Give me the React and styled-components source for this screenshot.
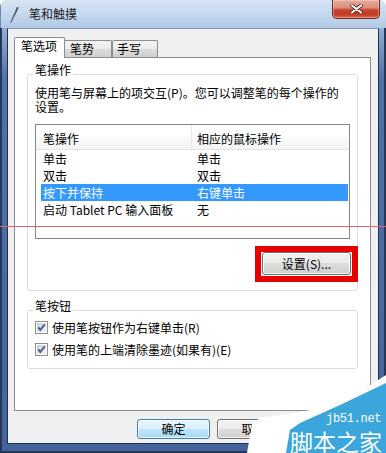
import React from "react";
import styled, { createGlobalStyle } from "styled-components";

const FONT = `"Noto Sans CJK SC", "Noto Sans", sans-serif`;

const GlobalStyle = createGlobalStyle`
  html, body { margin: 0; padding: 0; background: #ffffff; }
  body { width: 386px; height: 453px; overflow: hidden; font-family: ${FONT}; }
  *, *::before, *::after { box-sizing: border-box; }
`;

const Window = styled.div`
  position: relative;
  width: 386px;
  height: 453px;
  display: flex;
  flex-direction: column;
  overflow: hidden;
  border-radius: 7px 7px 0 0;
  background: #c9daee;
  font-family: ${FONT};
  font-size: 12px;
  color: #000;
`;

const TitleBar = styled.div`
  height: 28px;
  flex: none;
  display: flex;
  align-items: center;
  padding: 0 6px 0 7px;
  border-left: 1px solid #7088ab;
  background: linear-gradient(180deg, #d7e5f5 0%, #c5d8ee 50%, #b1c8e4 100%);
`;

const TitleIcon = styled.svg`
  width: 14px;
  height: 18px;
  flex: none;
`;

const TitleText = styled.span`
  margin-left: 7px;
  font-size: 12px;
  line-height: 14px;
  color: #1b1b1b;
`;

const CloseButton = styled.div`
  margin-left: auto;
  align-self: flex-start;
  width: 48px;
  height: 19px;
  display: flex;
  align-items: center;
  justify-content: center;
  border: 1px solid #6e2a22;
  border-top: none;
  border-radius: 0 0 5px 5px;
  background: linear-gradient(180deg, #e6ab9e 0%, #d98e7e 42%, #c8462f 55%, #c03a25 78%, #d8633f 100%);
  box-shadow: inset 0 0 0 1px rgba(255, 215, 205, 0.45);
`;

const FrameBody = styled.div`
  flex: 1;
  display: flex;
  background: linear-gradient(180deg, #94aed3 0%, #4f72a8 50px, #42649a 100%);
  border-left: 2px solid #26375a;
  border-right: 2px solid #26375a;
  border-bottom: 2px solid #26375a;
  padding: 0 5px 7px 5px;
`;

const Client = styled.div`
  flex: 1;
  display: flex;
  flex-direction: column;
  background: #f0f0f0;
  border: 1px solid #1f3054;
  border-top-color: #8196b7;
  padding: 8px 7px 4px 6px;
`;

const TabStrip = styled.div`
  position: relative;
  z-index: 1;
  height: 20px;
  flex: none;
  display: flex;
  align-items: flex-end;
`;

const Tab = styled.div`
  width: ${(p) => p.$w}px;
  height: ${(p) => (p.$active ? 21 : 17)}px;
  margin-left: ${(p) => p.$ml || 0}px;
  margin-bottom: ${(p) => (p.$active ? -1 : 0)}px;
  padding: 1px 0 0 ${(p) => p.$pl}px;
  border: 1px solid #898c95;
  border-bottom: none;
  border-radius: 2px 2px 0 0;
  background: ${(p) =>
    p.$active
      ? "#ffffff"
      : "linear-gradient(180deg, #f3f3f3 0%, #ebebeb 50%, #dddddd 50%, #cfcfcf 100%)"};
  font-size: 12px;
  line-height: 14px;
  white-space: nowrap;
`;

const Panel = styled.div`
  height: 354px;
  flex: none;
  display: flex;
  flex-direction: column;
  border: 1px solid #898c95;
  background: #ffffff;
  padding: 16px 12px 0 12px;
`;

const Group = styled.div`
  position: relative;
  display: flex;
  flex-direction: column;
  margin-top: ${(p) => p.$mt || 0}px;
  padding: ${(p) => p.$pad};
  border: 1px solid #d5dfe5;
  border-radius: 3px;
`;

const Legend = styled.span`
  position: absolute;
  top: -12px;
  left: 5px;
  padding: 0 2px;
  background: #ffffff;
  font-size: 12px;
  line-height: 14px;
`;

const Desc = styled.div`
  font-size: 12px;
  line-height: 14px;
  white-space: nowrap;
`;

const ListBox = styled.div`
  margin-top: 10px;
  height: 115px;
  display: flex;
  flex-direction: column;
  border: 1px solid #828790;
  background: #ffffff;
`;

const HeaderRow = styled.div`
  height: 25px;
  flex: none;
  display: flex;
  border-bottom: 1px solid #e3e3e3;
  background: linear-gradient(180deg, #ffffff 0%, #ffffff 50%, #f9fafb 50%, #f3f4f6 100%);
`;

const HeaderCell = styled.div`
  display: flex;
  align-items: center;
  padding: 2px 0 0 ${(p) => p.$pl}px;
  width: ${(p) => (p.$w ? `${p.$w}px` : "auto")};
  flex: ${(p) => (p.$w ? "none" : "1")};
  border-right: ${(p) => (p.$divider ? "1px solid #e3e8ee" : "none")};
  white-space: nowrap;
`;

const Row = styled.div`
  height: 17px;
  flex: none;
  display: flex;
  margin: 0 1px 0 5px;
  background: ${(p) => (p.$selected ? "#3399ff" : "transparent")};
  color: ${(p) => (p.$selected ? "#ffffff" : "#000000")};
  line-height: 17px;
`;

const Cell = styled.div`
  width: ${(p) => (p.$w ? `${p.$w}px` : "auto")};
  flex: ${(p) => (p.$w ? "none" : "1")};
  padding-left: ${(p) => p.$pl}px;
  white-space: nowrap;
`;

const RedMark = styled.div`
  align-self: flex-end;
  display: flex;
  margin: 7px -8px 0 0;
  padding: 0 1px 1px 1px;
  border: 6px solid #e60000;
`;

const Button = styled.button`
  width: ${(p) => p.$w}px;
  height: ${(p) => p.$h}px;
  flex: none;
  padding: 0;
  border: 1px solid ${(p) => (p.$primary ? "#3c7fb1" : "#707070")};
  border-radius: 3px;
  background: ${(p) =>
    p.$primary
      ? "linear-gradient(180deg, #eaf6fd 0%, #d9f0fc 50%, #bee6fd 50%, #a7d9f5 100%)"
      : "linear-gradient(180deg, #f2f2f2 0%, #ebebeb 50%, #dddddd 50%, #cfcfcf 100%)"};
  box-shadow: inset 0 0 0 1px rgba(255, 255, 255, 0.75);
  font-family: ${FONT};
  font-size: 12px;
  line-height: 14px;
  color: #000;
  white-space: nowrap;
`;

const CheckRow = styled.div`
  height: 22px;
  display: flex;
  align-items: center;
  gap: 4px;
  white-space: nowrap;
`;

const CheckBoxIcon = styled.svg`
  width: 13px;
  height: 13px;
  flex: none;
`;

const ButtonRow = styled.div`
  margin-top: 8px;
  margin-right: 1px;
  height: 20px;
  flex: none;
  display: flex;
  justify-content: flex-end;
  gap: 7px;
`;

const RedLine = styled.div`
  position: absolute;
  left: 0;
  right: 0;
  top: 226px;
  height: 1px;
  background: #e36565;
  z-index: 5;
`;

const WatermarkShape = styled.svg`
  position: absolute;
  right: 0;
  bottom: 0;
  width: 140px;
  height: 85px;
  z-index: 6;
`;

const WatermarkSite = styled.div`
  position: absolute;
  left: 326px;
  top: 413px;
  z-index: 7;
  font-family: "Liberation Mono", "DejaVu Sans Mono", monospace;
  font-size: 12px;
  line-height: 13px;
  letter-spacing: -0.3px;
  color: #ffffff;
`;

const WatermarkName = styled.div`
  position: absolute;
  left: 290px;
  top: 429px;
  z-index: 7;
  font-size: 23px;
  line-height: 24px;
  color: #ffffff;
  white-space: nowrap;
`;

function CheckBox() {
  return (
    <CheckBoxIcon viewBox="0 0 13 13">
      <defs>
        <linearGradient id="cbg" x1="0" y1="0" x2="1" y2="1">
          <stop offset="0" stopColor="#c9ced6" />
          <stop offset="1" stopColor="#f4f5f6" />
        </linearGradient>
      </defs>
      <rect x="0.5" y="0.5" width="12" height="12" fill="#ffffff" stroke="#8e8f8f" />
      <rect x="2" y="2" width="9" height="9" fill="url(#cbg)" />
      <path d="M3.2 6.4 L5.3 8.9 L9.8 3.4" fill="none" stroke="#4a5f8e" strokeWidth="1.9" />
    </CheckBoxIcon>
  );
}

const rows = [
  ["单击", "单击"],
  ["双击", "双击"],
  ["按下并保持", "右键单击", true],
  ["启动 Tablet PC 输入面板", "无"],
];

export default function App() {
  return (
    <>
      <GlobalStyle />
      <Window>
        <TitleBar>
          <TitleIcon viewBox="0 0 14 18">
            <defs>
              <linearGradient id="pen" x1="0" y1="1" x2="1" y2="0">
                <stop offset="0" stopColor="#6b7480" />
                <stop offset="1" stopColor="#1e232b" />
              </linearGradient>
            </defs>
            <path d="M2 17.5 L9 2 L10.6 2.7 L3.2 18 Z" fill="url(#pen)" />
            <path d="M2.6 17 L9.4 2.6" stroke="#9aa6b4" strokeWidth="0.5" />
          </TitleIcon>
          <TitleText>笔和触摸</TitleText>
          <CloseButton>
            <svg width="13" height="10" viewBox="0 0 13 10">
              <path d="M2 1.5 L11 8.5 M11 1.5 L2 8.5" stroke="#5a1e16" strokeWidth="3.6" strokeLinecap="round" />
              <path d="M2 1.5 L11 8.5 M11 1.5 L2 8.5" stroke="#ffffff" strokeWidth="2.2" strokeLinecap="round" />
            </svg>
          </CloseButton>
        </TitleBar>
        <FrameBody>
          <Client>
            <TabStrip>
              <Tab $active $w={51} $pl={6}>笔选项</Tab>
              <Tab $w={48} $ml={-1} $pl={5}>笔势</Tab>
              <Tab $w={46} $pl={4}>手写</Tab>
            </TabStrip>
            <Panel>
              <Group $pad="11px 7px 8px 7px">
                <Legend>笔操作</Legend>
                <Desc>
                  使用笔与屏幕上的项交互(P)。您可以调整笔的每个操作的
                  <br />
                  设置。
                </Desc>
                <ListBox>
                  <HeaderRow>
                    <HeaderCell $w={156} $pl={7} $divider>笔操作</HeaderCell>
                    <HeaderCell $pl={5}>相应的鼠标操作</HeaderCell>
                  </HeaderRow>
                  {rows.map(([a, b, sel]) => (
                    <Row key={a} $selected={sel}>
                      <Cell $w={150} $pl={2}>{a}</Cell>
                      <Cell $pl={6}>{b}</Cell>
                    </Row>
                  ))}
                </ListBox>
                <RedMark>
                  <Button $w={89} $h={23}>设置(S)...</Button>
                </RedMark>
              </Group>
              <Group $mt={19} $pad="5px 7px 8px 7px">
                <Legend>笔按钮</Legend>
                <CheckRow>
                  <CheckBox />
                  <span>使用笔按钮作为右键单击(R)</span>
                </CheckRow>
                <CheckRow>
                  <CheckBox />
                  <span>使用笔的上端清除墨迹(如果有)(E)</span>
                </CheckRow>
              </Group>
            </Panel>
            <ButtonRow>
              <Button $primary $w={73} $h={20}>确定</Button>
              <Button $w={73} $h={20}>取消</Button>
              <Button $w={73} $h={20} aria-hidden="true" />
            </ButtonRow>
          </Client>
        </FrameBody>
        <RedLine />
        <WatermarkShape viewBox="0 0 140 85">
          <polygon points="140,7 94,36 44,46 14,50 6,56 1,85 140,85" fill="#ffffff" />
          <polygon points="140,15 94,37 54,55 44,62 40,85 140,85" fill="#3aa6dc" />
        </WatermarkShape>
        <WatermarkSite>jb51.net</WatermarkSite>
        <WatermarkName>脚本之家</WatermarkName>
      </Window>
    </>
  );
}
